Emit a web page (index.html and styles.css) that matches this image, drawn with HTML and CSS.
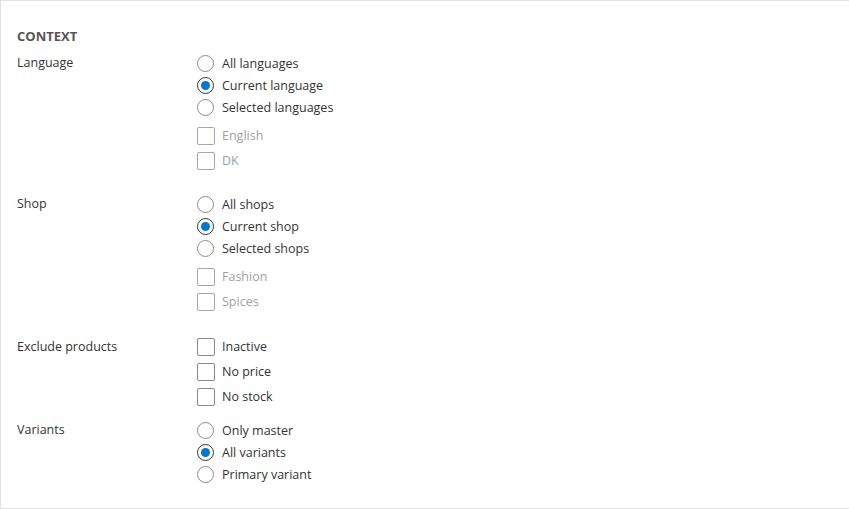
FILE: index.html
```html
<!DOCTYPE html>
<html>
<head>
<meta charset="utf-8">
<link rel="stylesheet" href="styles.css">
</head>
<body>
<div class="panel">
  <div class="heading">CONTEXT</div>

  <div class="field field--sub">
    <div class="label">Language</div>
    <div class="options">
      <div class="radio"><span class="dot"></span><span>All languages</span></div>
      <div class="radio"><span class="dot on"></span><span>Current language</span></div>
      <div class="radio"><span class="dot"></span><span>Selected languages</span></div>
      <div class="checks">
        <div class="check disabled"><span class="box"></span><span>English</span></div>
        <div class="check disabled"><span class="box"></span><span>DK</span></div>
      </div>
    </div>
  </div>

  <div class="field field--sub">
    <div class="label">Shop</div>
    <div class="options">
      <div class="radio"><span class="dot"></span><span>All shops</span></div>
      <div class="radio"><span class="dot on"></span><span>Current shop</span></div>
      <div class="radio"><span class="dot"></span><span>Selected shops</span></div>
      <div class="checks">
        <div class="check disabled"><span class="box"></span><span>Fashion</span></div>
        <div class="check disabled"><span class="box"></span><span>Spices</span></div>
      </div>
    </div>
  </div>

  <div class="field">
    <div class="label label--check">Exclude products</div>
    <div class="options">
      <div class="check"><span class="box"></span><span>Inactive</span></div>
      <div class="check"><span class="box"></span><span>No price</span></div>
      <div class="check"><span class="box"></span><span>No stock</span></div>
    </div>
  </div>

  <div class="field">
    <div class="label">Variants</div>
    <div class="options">
      <div class="radio"><span class="dot"></span><span>Only master</span></div>
      <div class="radio"><span class="dot on"></span><span>All variants</span></div>
      <div class="radio"><span class="dot"></span><span>Primary variant</span></div>
    </div>
  </div>
</div>
</body>
</html>
```

FILE: styles.css
```css
html, body {
  margin: 0;
  padding: 0;
  background: #fff;
}
body {
  font-family: "Open Sans", "Noto Sans", sans-serif;
  font-size: 12.5px;
  color: #333;
}
.panel {
  box-sizing: border-box;
  height: 509px;
  border: 1px solid #e1e1e1;
  border-right: none;
  padding: 25px 16px 0 16px;
}
.heading {
  font-weight: 700;
  font-size: 13px;
  color: #555;
  line-height: 20px;
  margin-bottom: 6px;
}
.field {
  display: grid;
  grid-template-columns: 180px 1fr;
  margin-bottom: 10px;
}
.field--sub {
  margin-bottom: 20px;
}
.label {
  line-height: 22px;
}
.label--check {
  line-height: 25px;
}
.options {
  display: flex;
  flex-direction: column;
}
.radio, .check {
  display: flex;
  align-items: center;
  gap: 8px;
}
.check {
  gap: 7px;
}
.radio {
  height: 22px;
}
.check {
  height: 25px;
}
.checks {
  margin-top: 5px;
  display: flex;
  flex-direction: column;
}
.dot {
  box-sizing: border-box;
  width: 17px;
  height: 17px;
  border: 1px solid #8a8a8a;
  border-radius: 50%;
  display: flex;
  align-items: center;
  justify-content: center;
  flex: none;
}
.dot.on {
  border-color: #333;
}
.dot.on::after {
  content: "";
  width: 9px;
  height: 9px;
  border-radius: 50%;
  background: #0078d4;
}
.box {
  box-sizing: border-box;
  width: 18px;
  height: 18px;
  border: 1px solid #8a8a8a;
  border-radius: 2px;
  flex: none;
}
.check.disabled {
  color: #a0a0a0;
}
.check.disabled .box {
  border-color: #a6a6a6;
}
```
